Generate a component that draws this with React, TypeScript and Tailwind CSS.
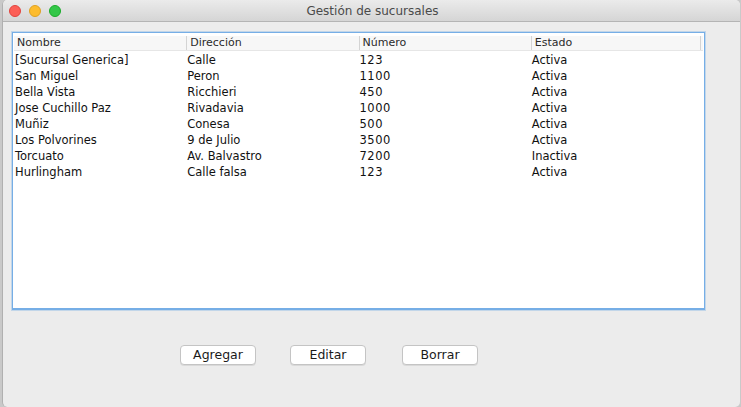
import React from 'react';

type Sucursal = {
  nombre: string;
  direccion: string;
  numero: string;
  estado: string;
};

const sucursales: Sucursal[] = [
  { nombre: '[Sucursal Generica]', direccion: 'Calle', numero: '123', estado: 'Activa' },
  { nombre: 'San Miguel', direccion: 'Peron', numero: '1100', estado: 'Activa' },
  { nombre: 'Bella Vista', direccion: 'Ricchieri', numero: '450', estado: 'Activa' },
  { nombre: 'Jose Cuchillo Paz', direccion: 'Rivadavia', numero: '1000', estado: 'Activa' },
  { nombre: 'Muñiz', direccion: 'Conesa', numero: '500', estado: 'Activa' },
  { nombre: 'Los Polvorines', direccion: '9 de Julio', numero: '3500', estado: 'Activa' },
  { nombre: 'Torcuato', direccion: 'Av. Balvastro', numero: '7200', estado: 'Inactiva' },
  { nombre: 'Hurlingham', direccion: 'Calle falsa', numero: '123', estado: 'Activa' },
];

const columnas = ['Nombre', 'Dirección', 'Número', 'Estado'];

function MacButton({ label, className = '' }: { label: string; className?: string }) {
  return (
    <button
      className={`w-[76px] h-[20px] bg-white border border-[#c4c4c4] rounded-[4px] shadow-[0_1px_0_rgba(0,0,0,0.08)] text-[12.5px] leading-none text-[#1a1a1a] ${className}`}
    >
      {label}
    </button>
  );
}

export default function App() {
  return (
    <div
      className="w-[741px] h-[407px] bg-[#c9c9c9] overflow-hidden"
      style={{ fontFamily: '"DejaVu Sans", "Noto Sans", sans-serif' }}
    >
      <div className="ml-[2px] w-[738px] h-[407px] bg-[#ececec] rounded-[5px] border-l border-[#b0b0b0] flex flex-col overflow-hidden">
        {/* barra de título */}
        <div className="h-[22px] shrink-0 bg-gradient-to-b from-[#ebebeb] to-[#d5d5d5] border-b border-[#b4b4b4] flex items-center relative">
          <div className="flex items-center gap-[8px] pl-[6px]">
            <span className="w-[12px] h-[12px] rounded-full bg-[#fc5f57] border border-[#e0443e]" />
            <span className="w-[12px] h-[12px] rounded-full bg-[#fdbc2e] border border-[#dea123]" />
            <span className="w-[12px] h-[12px] rounded-full bg-[#33c748] border border-[#1aab29]" />
          </div>
          <div className="absolute inset-0 flex items-center justify-center text-[12px] text-[#4a4a4a] pl-[2px]">
            Gestión de sucursales
          </div>
        </div>

        {/* tabla */}
        <div className="ml-[9px] mt-[10px] w-[693px] h-[278px] bg-white border border-[#76aee6] border-b-2 shadow-[0_0_0_1px_rgba(118,174,230,0.35)] flex flex-col">
          <div className="mx-[1px] mt-[3px] h-[15px] bg-[#f7f7f7] border-b border-[#e6e6e6] grid grid-cols-4 text-[11px] leading-[14px] text-[#2a2a2a]">
            {columnas.map((c, i) => (
              <div
                key={c}
                className={`pl-[3px] ${i > 0 ? 'border-l border-[#d4d4d4]' : ''} ${i === 3 ? 'border-r border-[#d4d4d4] mr-[2px]' : ''}`}
              >
                {c}
              </div>
            ))}
          </div>
          <div className="mx-[1px] pt-[1px] flex flex-col text-[11.5px] text-[#111]">
            {sucursales.map((s) => (
              <div key={s.nombre} className="grid grid-cols-4 h-[16px] leading-[16px]">
                <div className="pl-[1px]">{s.nombre}</div>
                <div className="pl-[1px]">{s.direccion}</div>
                <div className="pl-[1px] tracking-[0.5px]">{s.numero}</div>
                <div className="pl-[1px]">{s.estado}</div>
              </div>
            ))}
          </div>
        </div>

        {/* botones */}
        <div className="mt-[35px] ml-[177px] flex">
          <MacButton label="Agregar" />
          <MacButton label="Editar" className="ml-[34px]" />
          <MacButton label="Borrar" className="ml-[36px]" />
        </div>
      </div>
    </div>
  );
}
